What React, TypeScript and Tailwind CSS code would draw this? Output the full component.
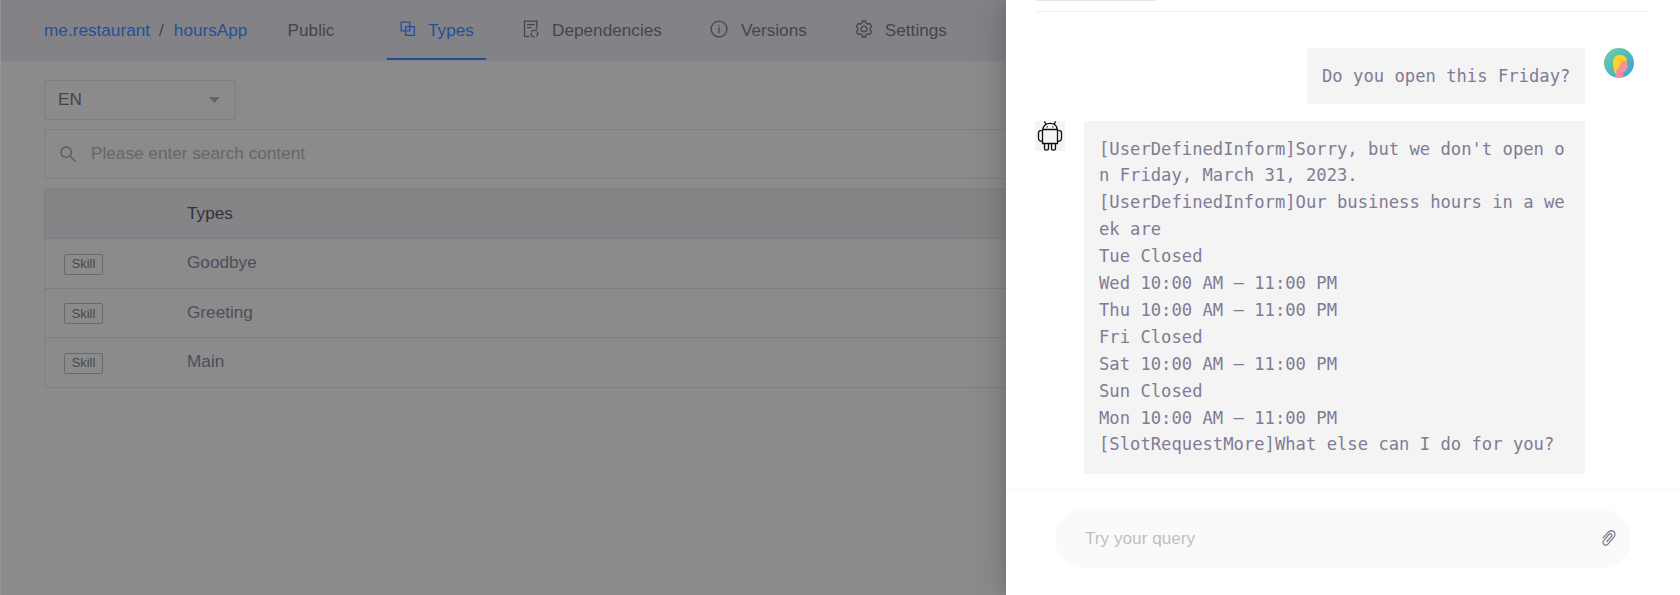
import React from "react";

type IconProps = { className?: string };

const TypesIcon = ({ className }: IconProps) => (
  <svg className={className} viewBox="0 0 16 16" fill="none" stroke="currentColor" strokeWidth="1.3">
    <path d="M1.200 1.200h8.600v8.600H1.200z M5.700 5.700h8.600v8.600H5.700z" />
  </svg>
);

const DependenciesIcon = ({ className }: IconProps) => (
  <svg className={className} viewBox="0 0 16 18" fill="none" stroke="currentColor" strokeWidth="1.3">
    <path d="M6.500 16.300H1.500V1.200h12.300v7.300 M4 4.600h7.600 M4 7.600h4.400" />
    <path d="M8.300 12.200a3.300 3.300 0 0 1 5.200-1.200M14.600 12.600a3.300 3.300 0 0 1-1.300 3.600M11.800 16.800a3.300 3.300 0 0 1-3.700-2.800" strokeWidth="1.2" />
    <path d="M13.800 9.600v1.800M15.200 12.600l-1.400 0M7.200 14.200l1.600-.5" strokeWidth="1" />
  </svg>
);

const InfoIcon = ({ className }: IconProps) => (
  <svg className={className} viewBox="0 0 18 18" fill="none" stroke="currentColor" strokeWidth="1.3">
    <circle cx="9" cy="9" r="7.900" />
    <path d="M9 7.600v5.600M9 4.800v1.500" />
  </svg>
);

const GearIcon = ({ className }: IconProps) => (
  <svg className={className} viewBox="0 0 18 18" fill="none" stroke="currentColor" strokeWidth="1.3" strokeLinejoin="round">
    <path d="M7.500 1h3l.5 2.100 1.700 1 2.300-.5 1.500 2.600-1.300 1.800v2l1.300 1.800-1.500 2.600-2.300-.5-1.700 1-.5 2.100h-3L7 14.900l-1.700-1-2.300.5-1.500-2.600L2.800 10V8L1.500 6.200 3 3.600l2.300.5 1.700-1z" />
    <circle cx="9" cy="9" r="2.900" />
  </svg>
);

const SearchIcon = ({ className }: IconProps) => (
  <svg className={className} viewBox="0 0 16 16" fill="none" stroke="currentColor" strokeWidth="1.4">
    <circle cx="6.200" cy="6.200" r="5.200" />
    <path d="M10 10l5.500 5.500" />
  </svg>
);

const PaperclipIcon = ({ className }: IconProps) => (
  <svg className={className} viewBox="0 0 14 16" fill="none" stroke="currentColor" strokeWidth="1.3" strokeLinecap="round" strokeLinejoin="round">
    <path d="M1.200 7.600L5.800 2.600C7.500.8 10 .3 11.700 1.600c1.700 1.400 1.600 3.900.2 5.500l-5.700 6.700c-1.100 1.300-2.900 1.700-4.200.7C.7 13.400.7 11.600 1.800 10.300l5-5.800c.7-.8 1.800-.9 2.500-.3.700.6.700 1.600.1 2.300L5 11.500" />
  </svg>
);

const RobotAvatar = () => (
  <svg className="size-[30px] shrink-0 bg-[#f4f4f4]" viewBox="0 0 30 30" fill="none" stroke="#111" strokeWidth="1.300">
    <path d="M8 8.500C8 4.500 11 2.300 15 2.300s7 2.200 7 6.200M10.800 3L9.400.4M19.200 3L20.600.4" />
    <path d="M7.500 8.500h15v14h-15z" />
    <path d="M6.700 9.700H5.500C4 9.700 3.500 10.600 3.500 12v5c0 2.600 1 3.300 3.700 3.300M23.300 9.700h1.200c1.500 0 2 .9 2 2.300v5c0 2.600-1 3.300-3.700 3.300" />
    <path d="M9.500 22.500v4.700c0 2.500 4 2.500 4 0v-4.700M16.500 22.500v4.700c0 2.500 4 2.500 4 0v-4.700" />
    <path d="M11.600 5.800h1.200M17.200 5.800h1.200" />
  </svg>
);

const UserAvatar = () => (
  <svg className="size-[30px] shrink-0" viewBox="0 0 30 30">
    <defs>
      <linearGradient id="avatarSky" x1="0" y1="0" x2="1" y2="1">
        <stop offset="0.1" stopColor="#6fcaa4" />
        <stop offset="0.9" stopColor="#35a9d0" />
      </linearGradient>
      <clipPath id="avatarDisc"><circle cx="15" cy="15" r="15" /></clipPath>
    </defs>
    <g clipPath="url(#avatarDisc)">
      <rect width="30" height="30" fill="url(#avatarSky)" />
      <path d="M14 13h9v3l1.500 3.200-1.500.5c.1 3-1.200 3.900-3.400 3.900l-1 6.900H11c.8-4 .8-6 .5-9z" fill="#f78f9c" />
      <path d="M9 14c0-4.600 3-7 7-7 4.500 0 7 2.600 7 6h-5l-2.500 5-3.300 4.800-.7 4C9.500 22 9 18 9 14z" fill="#ffd12f" />
    </g>
  </svg>
);

const tabs = [
  { label: "Types", Icon: TypesIcon, icon: "w-4 h-4", box: "w-[99px] ml-[42px] pl-[13px] gap-[12px] border-[#214c96] text-[#254f98]" },
  { label: "Dependencies", Icon: DependenciesIcon, icon: "w-4 h-[18px]", box: "ml-[37px] gap-[13px] border-transparent text-[#45434f]" },
  { label: "Versions", Icon: InfoIcon, icon: "w-[18px] h-[18px]", box: "ml-[48px] gap-[13px] border-transparent text-[#45434f]" },
  { label: "Settings", Icon: GearIcon, icon: "w-[18px] h-[18px]", box: "ml-[48px] gap-[12px] border-transparent text-[#45434f]" },
];

const rows = ["Goodbye", "Greeting", "Main"];

const reply = [
  "[UserDefinedInform]Sorry, but we don't open on Friday, March 31, 2023.",
  "[UserDefinedInform]Our business hours in a week are",
  "Tue Closed",
  "Wed 10:00 AM – 11:00 PM",
  "Thu 10:00 AM – 11:00 PM",
  "Fri Closed",
  "Sat 10:00 AM – 11:00 PM",
  "Sun Closed",
  "Mon 10:00 AM – 11:00 PM",
  "[SlotRequestMore]What else can I do for you?",
];

function Workspace() {
  return (
    <main className="flex w-[1006px] shrink-0 flex-col overflow-hidden border-l border-[#939393] bg-[#8b8b8b]">
      <header className="flex h-[61px] shrink-0 items-stretch bg-[#838387] pl-[43px] whitespace-nowrap">
        <nav className="flex w-[233px] items-center pb-[1px] text-[#254f98]">
          <span>me.restaurant</span>
          <span className="ml-[9px] mr-[10px] text-[#45434f]">/</span>
          <span>hoursApp</span>
        </nav>
        <span className="mt-4 flex h-[29px] w-[68px] items-center justify-center rounded-sm border border-[#808084] pb-[1px] text-[#45434f]">
          Public
        </span>
        {tabs.map(({ label, Icon, icon, box }) => (
          <div key={label} className={`mb-[1px] flex shrink-0 items-center border-b-2 ${box}`}>
            <Icon className={`shrink-0 ${icon}`} />
            <span className="pt-[1px]">{label}</span>
          </div>
        ))}
      </header>

      <section className="flex flex-col pl-[43px] pt-[19px]">
        <div className="flex h-10 w-[192px] items-center justify-between rounded-[3px] border border-[#7e7e83] pl-[13px] pr-[15px] text-[#45434f]">
          <span className="pb-[2px]">EN</span>
          <svg className="h-[6px] w-[11px] text-[#656565]" viewBox="0 0 11 6"><path d="M0 0h11L5.500 6z" fill="currentColor" /></svg>
        </div>
        <div className="mt-[9px] flex h-[50px] items-center gap-[15px] rounded-l-[3px] border border-r-0 border-[#808083] pl-[15px] text-[#666666]">
          <SearchIcon className="h-4 w-4 text-[#5c5b66]" />
          <span className="pb-[2px]">Please enter search content</span>
        </div>
        <div className="mt-[9px] rounded-l-[3px] border border-r-0 border-[#808084]">
          <div className="flex h-[50px] items-center border-b border-[#808084] bg-[#858588] pb-[2px] pl-[142px] text-[#33313e]">Types</div>
          {rows.map((name) => (
            <div key={name} className="flex h-[49.500px] items-center border-b border-[#7e7e82] pl-[19px] text-[#4f4d5c] last:h-[48.500px] last:border-b-0">
              <span className="mt-[2px] flex h-[21px] w-[39px] items-center justify-center rounded-[2px] border border-[#6a6a6a] text-[12.800px] text-[#484848]">Skill</span>
              <span className="ml-[84px] pb-[2px]">{name}</span>
            </div>
          ))}
        </div>
      </section>
    </main>
  );
}

function ChatDrawer() {
  return (
    <aside className="relative flex flex-1 flex-col bg-white text-[#7f7c96] shadow-[-6px_0_32px_rgba(0,0,0,0.14),-2px_0_12px_rgba(0,0,0,0.08)]">
      <div className="ml-[30px] h-[1px] w-[120px] bg-[#e6e6f3]" />
      <div className="mt-[10px] ml-[30px] mr-[32px] h-[1px] bg-[#f0f0f3]" />
      <div className="flex flex-1 flex-col gap-[17px] pt-[35.500px] font-['DejaVu_Sans_Mono',monospace] text-[17.200px] leading-[26.900px]">
        <div className="flex justify-end gap-[19px] pr-[46px]">
          <p className="flex h-[56px] w-[278px] items-center whitespace-nowrap rounded-[2px] bg-[#f4f4f4] pl-[15px] pt-[1px]">Do you open this Friday?</p>
          <UserAvatar />
        </div>
        <div className="flex gap-[19px] pl-[29px]">
          <RobotAvatar />
          <div className="h-[353px] w-[501px] break-all rounded-[2px] bg-[#f4f4f4] pl-[15px] pr-[18px] pt-[15px]">
            {reply.map((line) => <p key={line}>{line}</p>)}
          </div>
        </div>
      </div>
      <footer className="h-[106px] border-t border-[#f7f7f7] pl-[49px] pr-[49px] pt-[19px]">
        <div className="flex h-[59px] items-center justify-between rounded-full bg-[#fafafa] pl-[30px] pr-[15px]">
          <span className="pb-[1px] text-[#bfbfbf]">Try your query</span>
          <PaperclipIcon className="mb-[2px] h-4 w-[14px]" />
        </div>
      </footer>
    </aside>
  );
}

export default function App() {
  return (
    <div className="flex h-[595px] w-[1680px] overflow-hidden font-['Liberation_Sans',Arial,sans-serif] text-[17.200px] leading-6">
      <Workspace />
      <ChatDrawer />
    </div>
  );
}
